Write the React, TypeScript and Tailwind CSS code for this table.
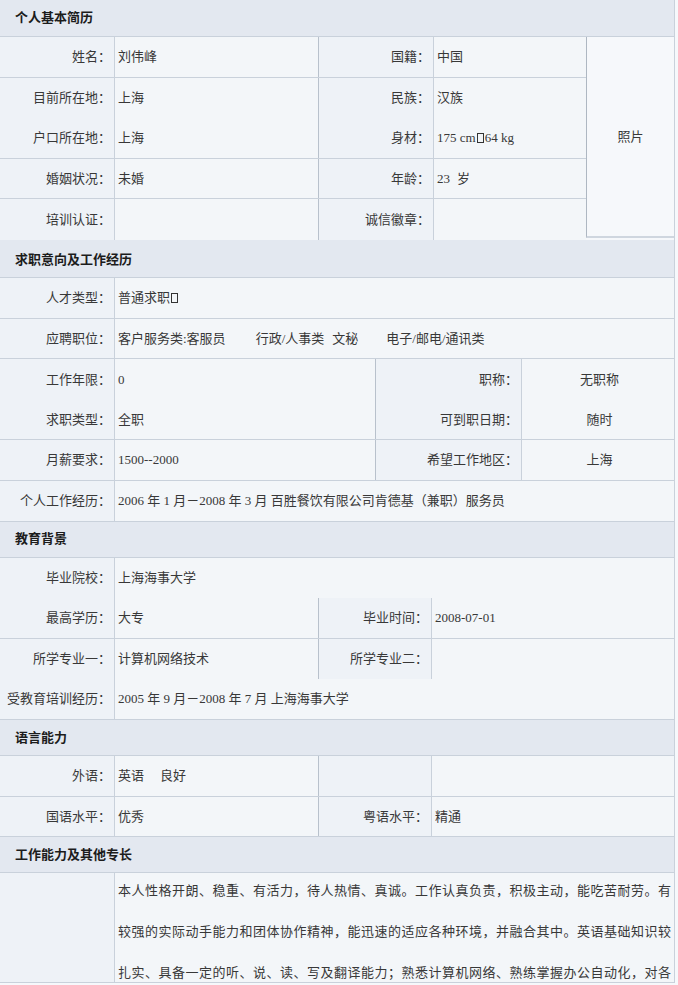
import React from "react";

const LINE = "border-[#c9d1db]";

function Header({ title }: { title: string }) {
  return (
    <div className={`h-[36px] flex items-center pl-[15px] bg-[#e3e8f0] border-b ${LINE} font-bold text-[13px] text-[#1c1c1c]`}>
      {title}
    </div>
  );
}

function Tofu() {
  return <span className="inline-block w-[7px] h-[10px] border border-[#333] align-[-1px] mx-[1px]" />;
}

function Label({ children, w = "w-[115px]", className = "" }: { children?: React.ReactNode; w?: string; className?: string }) {
  return (
    <div className={`${w} shrink-0 h-full flex items-center justify-end pr-[3px] bg-[#eef2f7] border-r ${LINE} ${className}`}>
      {children}
    </div>
  );
}

function Value({ children, w = "flex-1", className = "" }: { children?: React.ReactNode; w?: string; className?: string }) {
  return <div className={`${w} h-full flex items-center pl-[3px] bg-[#f3f6f9] ${className}`}>{children}</div>;
}

function Row({ children, line = true }: { children: React.ReactNode; line?: boolean }) {
  return <div className={`h-[40.6px] flex ${line ? `border-b ${LINE}` : ""}`}>{children}</div>;
}

export default function App() {
  return (
    <div className="w-[678px] min-h-[985px] bg-[#f6f8fb] font-['Liberation_Serif','Noto_Sans_CJK_SC',serif] text-[13px] text-[#383838] overflow-hidden">
      <div className={`w-[675px] border-r ${LINE}`}>
        {/* 个人基本简历 */}
        <div className="h-[37px] flex items-center pl-[15px] bg-[#e3e8f0] border-b border-[#c9d1db] font-bold text-[13px] text-[#1c1c1c]">
          个人基本简历
        </div>
        <div className="flex">
          <div className="w-[586px]">
            <Row>
              <Label>姓名：</Label>
              <Value w="w-[204px]" className="border-r border-[#b8c1cc]">刘伟峰</Value>
              <Label className="pr-0">国籍：</Label>
              <Value>中国</Value>
            </Row>
            <Row line={false}>
              <Label>目前所在地：</Label>
              <Value w="w-[204px]" className="border-r border-[#b8c1cc]">上海</Value>
              <Label className="pr-0">民族：</Label>
              <Value>汉族</Value>
            </Row>
            <Row>
              <Label>户口所在地：</Label>
              <Value w="w-[204px]" className="border-r border-[#b8c1cc]">上海</Value>
              <Label className="pr-0">身材：</Label>
              <Value>
                175 cm<Tofu />64 kg
              </Value>
            </Row>
            <Row>
              <Label>婚姻状况：</Label>
              <Value w="w-[204px]" className="border-r border-[#b8c1cc]">未婚</Value>
              <Label className="pr-0">年龄：</Label>
              <Value>
                23<span className="ml-[7px]">岁</span>
              </Value>
            </Row>
            <Row line={false}>
              <Label>培训认证：</Label>
              <Value w="w-[204px]" className="border-r border-[#b8c1cc]" />
              <Label className="pr-0">诚信徽章：</Label>
              <Value />
            </Row>
          </div>
          <div className="flex-1 h-[201px] flex items-center justify-center bg-[#f6f8fb] border-l border-[#aeb7c2] border-b-2 border-b-[#cfd6df]">
            照片
          </div>
        </div>

        {/* 求职意向及工作经历 */}
        <div className="h-[2px] bg-[#e3e8f0]" />
        <Header title="求职意向及工作经历" />
        <Row>
          <Label>人才类型：</Label>
          <Value>
            普通求职<Tofu />
          </Value>
        </Row>
        <Row>
          <Label>应聘职位：</Label>
          <Value>
            <span>客户服务类:客服员</span>
            <span className="ml-[30px]">行政/人事类</span>
            <span className="ml-[8px]">文秘</span>
            <span className="ml-[28px]">电子/邮电/通讯类</span>
          </Value>
        </Row>
        <Row line={false}>
          <Label>工作年限：</Label>
          <Value w="w-[261px]" className="border-r border-[#b8c1cc]">0</Value>
          <Label w="w-[146px]" className="pr-[3px]">职称：</Label>
          <Value className="justify-center pl-0">无职称</Value>
        </Row>
        <Row>
          <Label>求职类型：</Label>
          <Value w="w-[261px]" className="border-r border-[#b8c1cc]">全职</Value>
          <Label w="w-[146px]" className="pr-[3px]">可到职日期：</Label>
          <Value className="justify-center pl-0">随时</Value>
        </Row>
        <Row>
          <Label>月薪要求：</Label>
          <Value w="w-[261px]" className="border-r border-[#b8c1cc]">1500--2000</Value>
          <Label w="w-[146px]" className="pr-[3px]">希望工作地区：</Label>
          <Value className="justify-center pl-0">上海</Value>
        </Row>
        <Row>
          <Label>个人工作经历：</Label>
          <Value>2006 年 1 月－2008 年 3 月 百胜餐饮有限公司肯德基（兼职）服务员</Value>
        </Row>

        {/* 教育背景 */}
        <Header title="教育背景" />
        <Row line={false}>
          <Label>毕业院校：</Label>
          <Value>上海海事大学</Value>
        </Row>
        <Row>
          <Label>最高学历：</Label>
          <Value w="w-[204px]" className="border-r border-[#b8c1cc]">大专</Value>
          <Label w="w-[113px]" className="pr-0">毕业时间：</Label>
          <Value>2008-07-01</Value>
        </Row>
        <Row line={false}>
          <Label>所学专业一：</Label>
          <Value w="w-[204px]" className="border-r border-[#b8c1cc]">计算机网络技术</Value>
          <Label w="w-[113px]" className="pr-0">所学专业二：</Label>
          <Value />
        </Row>
        <Row>
          <Label className="pr-[3px]">受教育培训经历：</Label>
          <Value>2005 年 9 月－2008 年 7 月 上海海事大学</Value>
        </Row>

        {/* 语言能力 */}
        <Header title="语言能力" />
        <Row>
          <Label>外语：</Label>
          <Value w="w-[204px]" className="border-r border-[#b8c1cc]">
            英语<span className="ml-[16px]">良好</span>
          </Value>
          <Label w="w-[113px]" className="pr-0" />
          <Value />
        </Row>
        <Row>
          <Label>国语水平：</Label>
          <Value w="w-[204px]" className="border-r border-[#b8c1cc]">优秀</Value>
          <Label w="w-[113px]" className="pr-0">粤语水平：</Label>
          <Value>精通</Value>
        </Row>

        {/* 工作能力及其他专长 */}
        <Header title="工作能力及其他专长" />
        <div className={`h-[110px] flex border-b ${LINE}`}>
          <div className={`w-[115px] shrink-0 bg-[#eef2f7] border-r ${LINE}`} />
          <div className="flex-1 bg-[#f3f6f9] pl-[3px] pr-[3px]">
            <div className="-mt-[3px] leading-[41px] text-justify [text-align-last:justify]">
              <div>本人性格开朗、稳重、有活力，待人热情、真诚。工作认真负责，积极主动，能吃苦耐劳。有</div>
              <div>较强的实际动手能力和团体协作精神，能迅速的适应各种环境，并融合其中。英语基础知识较</div>
              <div>扎实、具备一定的听、说、读、写及翻译能力；熟悉计算机网络、熟练掌握办公自动化，对各</div>
            </div>
          </div>
        </div>
      </div>
    </div>
  );
}
